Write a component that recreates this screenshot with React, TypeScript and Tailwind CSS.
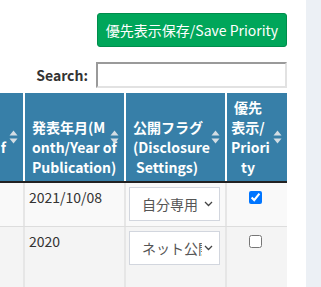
import React from "react";

const FONT = { fontFamily: '"Noto Sans CJK JP", "Noto Sans", sans-serif' };

function SortIcon() {
  return (
    <svg width="9" height="14" viewBox="0 0 9 14" className="shrink-0">
      <path d="M4.5 0.5 L8.5 5.5 L0.5 5.5 Z" fill="#d3dde4" />
      <path d="M4.5 13.5 L8.5 8.5 L0.5 8.5 Z" fill="#d3dde4" />
    </svg>
  );
}

function FakeSelect({ label }: { label: string }) {
  return (
    <div className="flex h-[34px] w-[91px] items-center border border-[#d2d6de] bg-white pl-[12px] pr-[6px] text-[14px] text-[#555]">
      <span className="flex-1 overflow-hidden whitespace-nowrap">{label}</span>
      <svg width="9" height="6" viewBox="0 0 9 6" className="ml-[2px] shrink-0">
        <path d="M1 1 L4.5 4.5 L8 1" fill="none" stroke="#444" strokeWidth="1.3" />
      </svg>
    </div>
  );
}

type HeadCell = { lines: string[]; className: string };

const headers: HeadCell[] = [
  { lines: ["f", "\u00a0"], className: "justify-end text-right pl-0 pr-[17px]" },
  { lines: ["発表年月(M", "onth/Year of", "Publication)"], className: "pl-[7px] pr-[24px] text-center" },
  { lines: ["公開フラグ", "(Disclosure", "Settings)"], className: "pl-[7px] pr-[24px] text-center" },
  { lines: ["優先", "表示/", "Priori", "ty"], className: "pl-[4px] pr-[22px] text-center" },
];

export default function App() {
  return (
    <div className="flex h-[287px] w-[321px] overflow-hidden bg-white text-[#333]" style={FONT}>
      <div className="w-[306px] shrink-0 bg-white pr-[19px]">
        <div className="flex justify-end pt-[13px]">
          <button
            type="button"
            className="flex h-[34px] w-[190px] items-center justify-center rounded-[3px] border border-[#008d4c] bg-[#00a65a] text-[14px] text-white"
          >
            優先表示保存/Save Priority
          </button>
        </div>

        <div className="mt-[15px] flex items-center justify-end gap-[8px]">
          <span className="text-[14px] font-bold text-[#333]">Search:</span>
          <div className="h-[26px] w-[191px] border-2 border-t-[#9a9a9a] border-l-[#9a9a9a] border-r-[#e2e2e2] border-b-[#e2e2e2] bg-white" />
        </div>

        <div className="mt-[5px] w-[287px]">
          <div className="grid grid-cols-[23px_101px_101px_62px] border-b-2 border-[#222]">
            {headers.map((h, i) => (
              <div
                key={i}
                className={
                  "relative flex h-[88px] items-center bg-[#377fa8] py-[4px] " +
                  (i > 0 ? "border-l-2 border-white " : "")
                }
              >
                <div
                  className={
                    "flex h-full w-full flex-col justify-end overflow-hidden whitespace-nowrap text-[14px] font-bold leading-[20px] text-white " +
                    h.className
                  }
                >
                  {h.lines.map((l, j) => (
                    <div key={j}>{l}</div>
                  ))}
                </div>
                <div className="absolute right-[5px] top-[37px]">
                  <SortIcon />
                </div>
              </div>
            ))}
          </div>

          <div className="grid h-[44px] grid-cols-[23px_101px_101px_62px] border-b border-[#dddddd] bg-[#f9f9f9]">
            <div />
            <div className="border-l-2 border-[#e6e6e6] pl-[4px] pt-[4px] text-[14px] leading-[20px]">2021/10/08</div>
            <div className="border-l-2 border-[#e6e6e6] pl-[3px] pt-[4px]">
              <FakeSelect label="自分専用" />
            </div>
            <div className="flex justify-center border-l-2 border-[#e6e6e6] pt-[8px] pr-[3px]">
              <input type="checkbox" defaultChecked className="m-0 h-[13px] w-[13px]" />
            </div>
          </div>

          <div className="grid h-[80px] grid-cols-[23px_101px_101px_62px] bg-[#f4f4f4]">
            <div />
            <div className="border-l-2 border-[#e6e6e6] pl-[4px] pt-[4px] text-[14px] leading-[20px]">2020</div>
            <div className="border-l-2 border-[#e6e6e6] pl-[3px] pt-[4px]">
              <FakeSelect label="ネット公開" />
            </div>
            <div className="flex justify-center border-l-2 border-[#e6e6e6] pt-[8px] pr-[3px]">
              <input type="checkbox" className="m-0 h-[13px] w-[13px]" />
            </div>
          </div>
        </div>
      </div>
      <div className="flex-1 bg-[#ecf0f5]" />
    </div>
  );
}
